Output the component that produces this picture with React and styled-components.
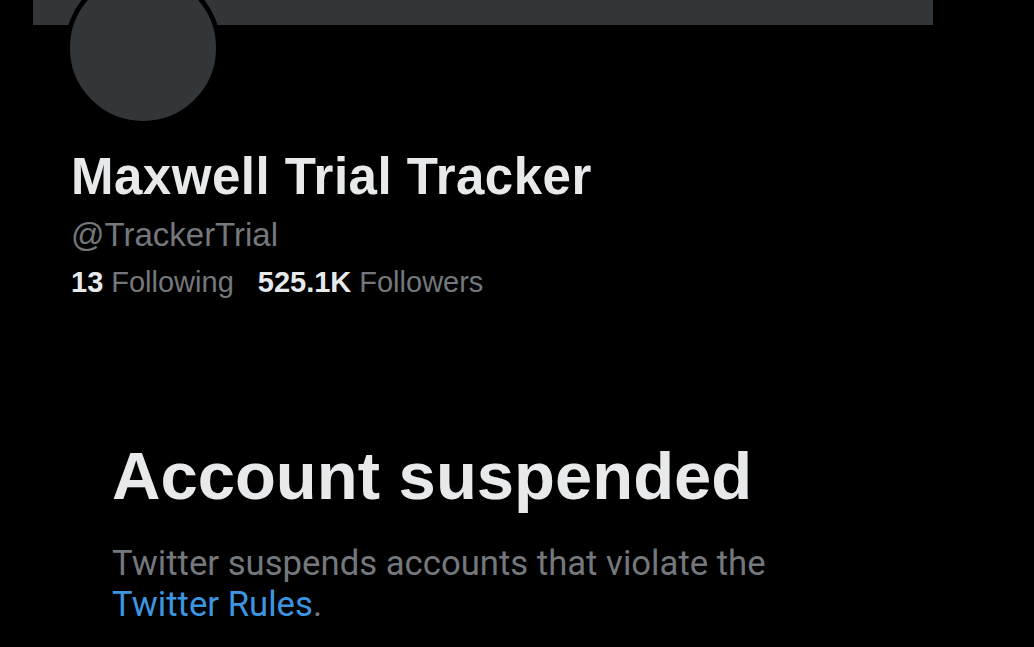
import React from "react";
import styled, { createGlobalStyle } from "styled-components";

const GlobalStyle = createGlobalStyle`
  html, body {
    margin: 0;
    padding: 0;
    background: #000;
  }
  body {
    font-family: "Liberation Sans", Arial, sans-serif;
    -webkit-font-smoothing: antialiased;
  }
`;

const Page = styled.div`
  width: 1034px;
  height: 647px;
  overflow: hidden;
  background: #000;
  display: flex;
  flex-direction: column;
`;

const Banner = styled.div`
  margin-left: 33px;
  width: 900px;
  height: 25px;
  background: #333639;
  flex-shrink: 0;
`;

const Avatar = styled.div`
  margin-top: -55px;
  margin-left: 65px;
  width: 146px;
  height: 146px;
  border-radius: 50%;
  background: #333639;
  border: 5px solid #000;
  flex-shrink: 0;
`;

const Profile = styled.div`
  padding-left: 71px;
  display: flex;
  flex-direction: column;
`;

const Name = styled.h1`
  margin: 22px 0 0;
  font-size: 51px;
  line-height: 58px;
  font-weight: 700;
  color: #e7e9ea;
  letter-spacing: 0.5px;
`;

const Handle = styled.div`
  margin-top: 7px;
  font-size: 33px;
  line-height: 44px;
  color: #74787c;
`;

const Stats = styled.div`
  display: flex;
  gap: 24px;
  margin-top: 5px;
  font-size: 29px;
  line-height: 40px;
`;

const Stat = styled.span`
  color: #74787c;
`;

const Count = styled.b`
  color: #e7e9ea;
  font-weight: 700;
  margin-right: 8px;
`;

const Notice = styled.div`
  padding-left: 112px;
  margin-top: 136px;
  display: flex;
  flex-direction: column;
`;

const Headline = styled.h2`
  margin: 0;
  font-size: 67px;
  line-height: 76px;
  font-weight: 700;
  color: #e7e9ea;
`;

const Body = styled.p`
  margin: 29px 0 0;
  font-family: "Roboto", "Liberation Sans", sans-serif;
  font-size: 34.7px;
  line-height: 41px;
  color: #74787c;
  width: 700px;
`;

const RulesLink = styled.a`
  color: #3d95e0;
  text-decoration: none;
`;

export default function App() {
  return (
    <Page>
      <GlobalStyle />
      <Banner />
      <Avatar />
      <Profile>
        <Name>Maxwell Trial Tracker</Name>
        <Handle>@TrackerTrial</Handle>
        <Stats>
          <Stat>
            <Count>13</Count>Following
          </Stat>
          <Stat>
            <Count>525.1K</Count>Followers
          </Stat>
        </Stats>
      </Profile>
      <Notice>
        <Headline>Account suspended</Headline>
        <Body>
          Twitter suspends accounts that violate the{" "}
          <RulesLink href="#">Twitter Rules</RulesLink>.
        </Body>
      </Notice>
    </Page>
  );
}
